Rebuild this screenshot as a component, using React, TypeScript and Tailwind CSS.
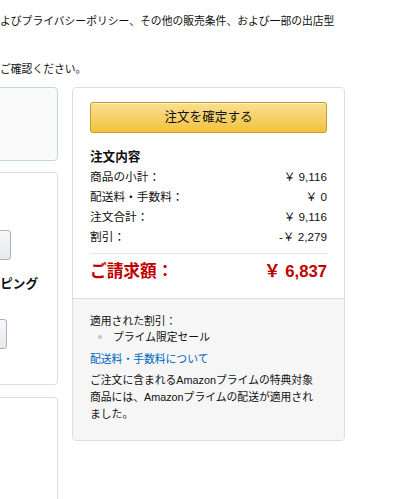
import React from "react";

const font = { fontFamily: '"Liberation Sans", "Noto Sans CJK JP", sans-serif' };

function Row({ label, value }: { label: string; value: string }) {
  return (
    <div className="flex justify-between h-[20px] leading-[20px] text-[11.7px]">
      <span>{label}</span>
      <span>{value}</span>
    </div>
  );
}

export default function App() {
  return (
    <div className="w-[406px] h-[499px] overflow-hidden bg-white text-[#111]" style={font}>
      <div className="pt-[12.7px] text-[10.8px] leading-[16px] whitespace-nowrap">
        <div>よびプライバシーポリシー、その他の販売条件、および一部の出店型</div>
        <div className="mt-[32.6px]">ご確認ください。</div>
      </div>

      <div className="mt-[9.7px] flex items-start -ml-[300px] gap-[14px]">
        {/* left column (cropped) */}
        <div className="w-[358px] shrink-0 flex flex-col">
          <div className="h-[74px] rounded-[4px] border border-[#bcdbe6] bg-[#fafafa]" />
          <div className="mt-[11px] h-[213px] rounded-[4px] border border-[#dddddd] bg-white flex flex-col">
            <div className="mt-[57px] ml-[160px] w-[150px] h-[30px] rounded-[3px] border border-[#adb1b8] bg-gradient-to-b from-[#f7f8fa] to-[#e7e9ec]" />
            <div className="mt-[15px] mr-[19px] h-[18px] leading-[18px] text-right text-[12.6px] font-bold whitespace-nowrap">
              ピング
            </div>
            <div className="mt-[26px] ml-[156px] w-[150px] h-[30px] rounded-[3px] border border-[#adb1b8] bg-gradient-to-b from-[#f7f8fa] to-[#e7e9ec]" />
          </div>
          <div className="mt-[12px] h-[200px] rounded-[4px] border border-[#dddddd] bg-white" />
        </div>

        {/* order summary panel */}
        <div className="w-[273px] shrink-0 rounded-[4px] border border-[#dddddd] overflow-hidden">
          <div className="bg-white px-[17px] pt-[14px] pb-[15px]">
            <button className="w-[237px] h-[31px] rounded-[3px] border border-[#c49a2c] bg-gradient-to-b from-[#f9df91] to-[#f3c236] text-[12.6px] text-[#111] flex items-center justify-center shadow-[inset_0_1px_0_rgba(255,255,255,0.5)]">
              注文を確定する
            </button>
            <div className="mt-[14px] h-[20px] leading-[20px] text-[12.6px] font-bold">注文内容</div>
            <Row label="商品の小計：" value="￥ 9,116" />
            <Row label="配送料・手数料：" value="￥ 0" />
            <Row label="注文合計：" value="￥ 9,116" />
            <Row label="割引：" value="-￥ 2,279" />
            <div className="mt-[6px] h-px bg-[#e7e7e7]" />
            <div className="mt-[7px] h-[22px] leading-[22px] flex justify-between text-[16.7px] font-bold text-[#c10000]">
              <span>ご請求額：</span>
              <span>￥ 6,837</span>
            </div>
          </div>
          <div className="border-t border-[#dddddd] bg-[#f6f6f6] px-[17px] pt-[15px] pb-[17.5px] text-[10.8px]">
            <div className="leading-[15.6px]">適用された割引：</div>
            <div className="flex items-center leading-[15.6px]">
              <span className="ml-[8px] w-[4px] h-[4px] rounded-full bg-[#c4c4c4]" />
              <span className="ml-[11px]">プライム限定セール</span>
            </div>
            <div className="mt-[5.8px] leading-[16px]">
              <a className="text-[#0066c0]">配送料・手数料について</a>
            </div>
            <p className="mt-[5.35px] leading-[16.7px]">
              ご注文に含まれるAmazonプライムの特典対象
              <br />
              商品には、Amazonプライムの配送が適用され
              <br />
              ました。
            </p>
          </div>
        </div>
      </div>
    </div>
  );
}
